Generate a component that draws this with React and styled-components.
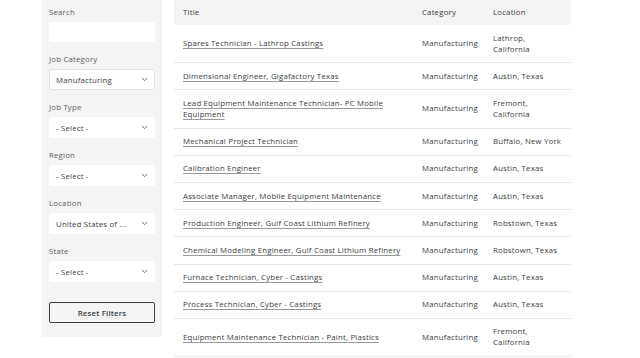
import React from "react";
import styled, { createGlobalStyle } from "styled-components";

const GlobalStyle = createGlobalStyle`
  body {
    margin:0;
    background:#fff;
    font-family:"Open Sans", "Liberation Sans", sans-serif;
    color:#393c41;
    letter-spacing:0.2px;
  }
`;

const Page = styled.div`
  display:flex;
  align-items:flex-start;
  gap:12px;
  padding-left:42px;
`;

const Sidebar = styled.aside`
  width:120px;
  box-sizing:border-box;
  background:#f4f4f4;
  padding:6px 7px 14px;
  display:flex;
  flex-direction:column;
`;

const Field = styled.div`
  display:flex;
  flex-direction:column;
  margin-bottom:11px;
`;

const Label = styled.label`
  font-size:7.8px;
  color:#5c5e62;
  line-height:12px;
  margin-bottom:4px;
`;

const Input = styled.div`
  height:20px;
  background:#fff;
  border-radius:2px;
`;

const Select = styled.div`
  height:21px;
  box-sizing:border-box;
  background:#fff;
  border-radius:2px;
  border:1px solid ${p => (p.$active ? "#e2e2e2" : "transparent")};
  display:flex;
  align-items:center;
  justify-content:space-between;
  padding:0 6px 0 6px;
  font-size:7.8px;
  color:#393c41;
`;

const ResetButton = styled.button`
  margin-top:9px;
  height:21px;
  border:1.5px solid #393c41;
  border-radius:2px;
  background:#f4f4f4;
  font-family:inherit;
  letter-spacing:inherit;
  font-size:7.8px;
  font-weight:600;
  color:#393c41;
  cursor:pointer;
`;

const Table = styled.table`
  width:397px;
  border-collapse:collapse;
  font-size:7.8px;
  table-layout:fixed;
`;

const Th = styled.th`
  background:#f4f4f4;
  height:25px;
  text-align:left;
  font-weight:400;
  padding:0 9px 2px;
  width:${p => p.$w}px;
  box-sizing:border-box;
`;

const Td = styled.td`
  border-bottom:1px solid #e6e6e6;
  padding:7.6px 9px;
  line-height:11px;
  vertical-align:middle;
`;

const Link = styled.a`
  color:#393c41;
  text-decoration:underline;
  text-decoration-color:#9a9a9a;
  text-underline-offset:2px;
`;

const Chevron = () => (
  <svg width="7" height="5" viewBox="0 0 7 5">
    <path d="M1 1 L3.5 3.6 L6 1" fill="none" stroke="#5c5e62" strokeWidth="0.9" />
  </svg>
);

const filters = [
  { label: "Job Category", value: "Manufacturing", active: true },
  { label: "Job Type", value: "- Select -" },
  { label: "Region", value: "- Select -" },
  { label: "Location", value: "United States of ..." },
  { label: "State", value: "- Select -" },
];

const jobs = [
  ["Spares Technician - Lathrop Castings", "Lathrop, California"],
  ["Dimensional Engineer, Gigafactory Texas", "Austin, Texas"],
  ["Lead Equipment Maintenance Technician- PC Mobile Equipment", "Fremont, California"],
  ["Mechanical Project Technician", "Buffalo, New York"],
  ["Calibration Engineer", "Austin, Texas"],
  ["Associate Manager, Mobile Equipment Maintenance", "Austin, Texas"],
  ["Production Engineer, Gulf Coast Lithium Refinery", "Robstown, Texas"],
  ["Chemical Modeling Engineer, Gulf Coast Lithium Refinery", "Robstown, Texas"],
  ["Furnace Technician, Cyber - Castings", "Austin, Texas"],
  ["Process Technician, Cyber - Castings", "Austin, Texas"],
  ["Equipment Maintenance Technician - Paint, Plastics", "Fremont, California"],
];

export default function App() {
  return (
    <>
      <GlobalStyle />
      <Page>
        <Sidebar>
          <Field>
            <Label>Search</Label>
            <Input />
          </Field>
          {filters.map(f => (
            <Field key={f.label}>
              <Label>{f.label}</Label>
              <Select $active={f.active}>
                <span>{f.value}</span>
                <Chevron />
              </Select>
            </Field>
          ))}
          <ResetButton>Reset Filters</ResetButton>
        </Sidebar>
        <Table>
          <thead>
            <tr>
              <Th $w={239}>Title</Th>
              <Th $w={71}>Category</Th>
              <Th $w={87}>Location</Th>
            </tr>
          </thead>
          <tbody>
            {jobs.map(([title, loc]) => (
              <tr key={title}>
                <Td><Link href="#">{title}</Link></Td>
                <Td>Manufacturing</Td>
                <Td>{loc}</Td>
              </tr>
            ))}
          </tbody>
        </Table>
      </Page>
    </>
  );
}
